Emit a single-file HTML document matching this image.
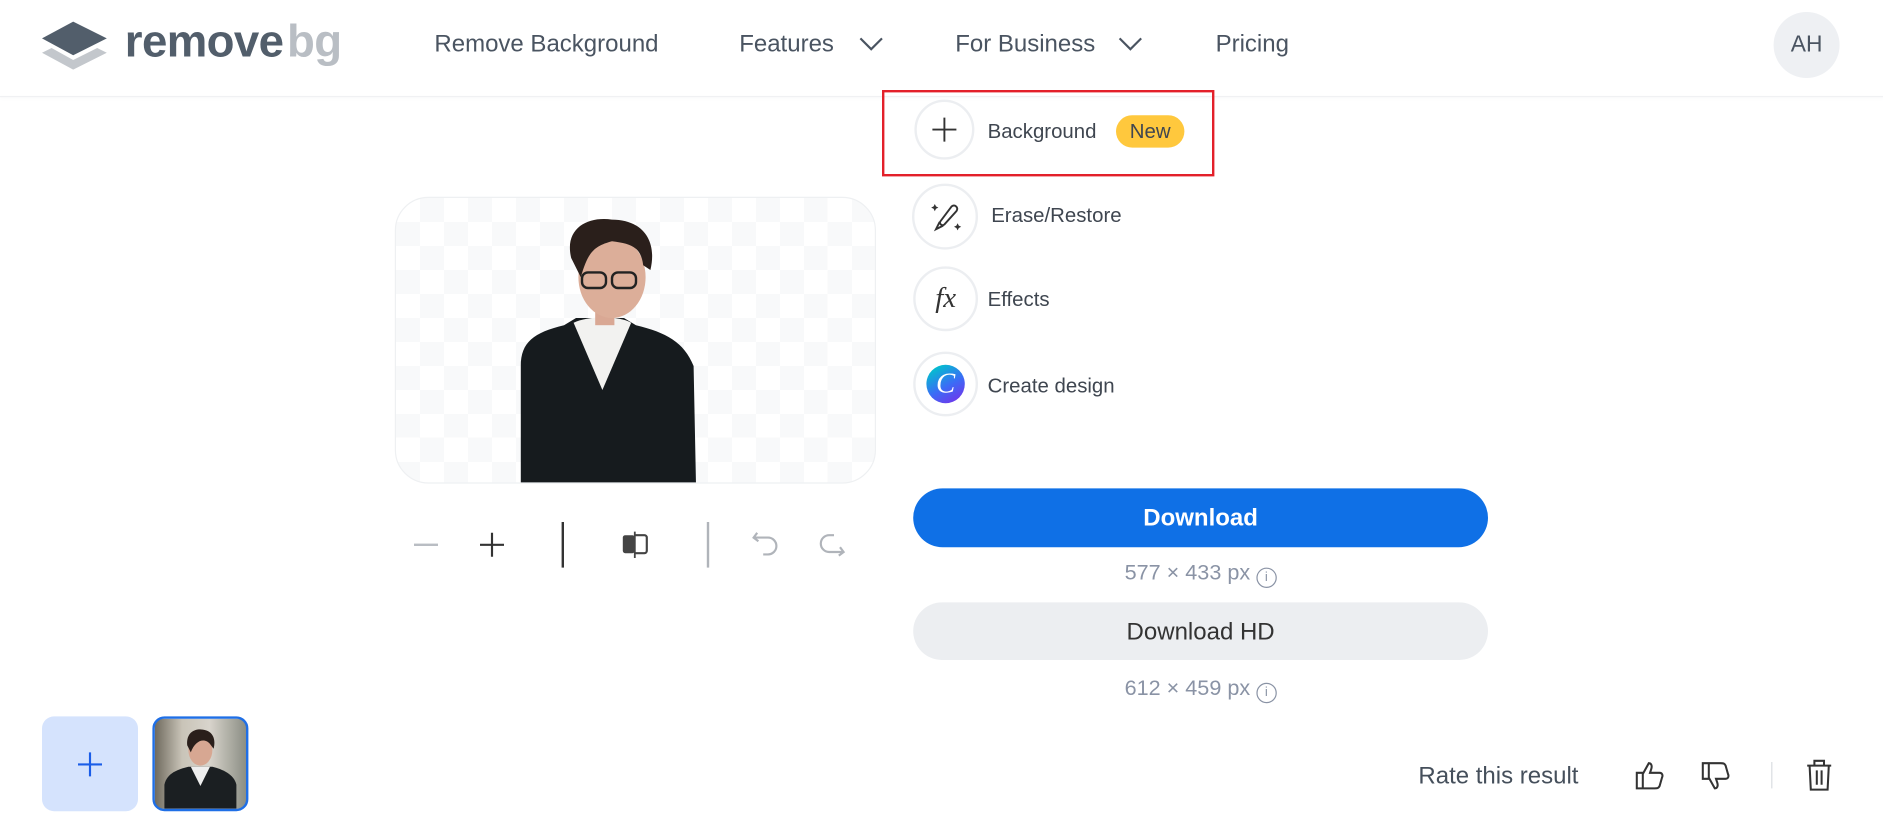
<!DOCTYPE html>
<html><head><meta charset="utf-8"><style>
html,body{margin:0;padding:0;background:#fff;overflow:hidden}
body{width:1883px;height:814px}
#w{position:absolute;left:0;top:0;width:1570px;height:680px;transform:scale(1.2);transform-origin:0 0;font-family:"Liberation Sans",sans-serif;color:#454f5b}
.a{position:absolute}
.nav{font-size:20px;top:26px;color:#4a5461}
.circ{position:absolute;width:50px;height:50px;border:2px solid #eceef1;border-radius:50%;box-sizing:border-box;display:flex;align-items:center;justify-content:center}
.lbl{position:absolute;font-size:17px;color:#3f4650}
.chk{background-color:#fff;background-image:linear-gradient(45deg,#f8f9fa 25%,transparent 25%,transparent 75%,#f8f9fa 75%),linear-gradient(45deg,#f8f9fa 25%,transparent 25%,transparent 75%,#f8f9fa 75%);background-size:40px 40px;background-position:0 0,20px 20px}
</style></head><body><div id="w">
<svg class="a" style="left:33px;top:16px" width="60" height="42" viewBox="0 0 60 42"><path d="M2 28 L28 42 L56 28 L48 24 L28 34 L10 24Z" fill="#c3c7cc"/><path d="M28 2 L56 16 L28 30 L2 16Z" fill="#525e6b"/></svg>
<div class="a" style="left:104px;top:14px;font-size:38px;font-weight:bold;color:#525e6b;letter-spacing:-0.5px">remove<span style="color:#b9bec4;margin-left:3px">bg</span></div>
<div class="a nav" style="left:362px">Remove Background</div>
<div class="a nav" style="left:616px">Features</div>
<svg class="a" style="left:716px;top:31px" width="20" height="12"><path d="M1 1 L10 10 L19 1" stroke="#4a5461" stroke-width="1.8" fill="none"/></svg>
<div class="a nav" style="left:796px">For Business</div>
<svg class="a" style="left:932px;top:31px" width="20" height="12"><path d="M1 1 L10 10 L19 1" stroke="#4a5461" stroke-width="1.8" fill="none"/></svg>
<div class="a nav" style="left:1013px">Pricing</div>
<div class="a" style="left:1478px;top:10px;width:55px;height:55px;border-radius:50%;background:#eef0f3;font-size:19px;line-height:55px;text-align:center;color:#4a5461">AH</div>
<div class="a" style="left:0;top:80px;width:1570px;height:1px;background:#f0f1f3;box-shadow:0 1px 3px #f3f4f6"></div>
<div class="a" style="left:735px;top:75px;width:273px;height:68px;border:2px solid #e3202a"></div>
<div class="circ" style="left:762px;top:83px"><svg width="24" height="24"><path d="M12 2V22M2 12H22" stroke="#333" stroke-width="1.6"/></svg></div>
<div class="lbl" style="left:823px;top:100px">Background</div>
<div class="a" style="left:930px;top:96px;width:57px;height:27px;border-radius:14px;background:#ffc83d;font-size:17px;line-height:27px;text-align:center;color:#3f4650">New</div>
<div class="circ" style="left:760px;top:153px;width:55px;height:55px"><svg width="30" height="30" viewBox="0 0 30 30"><path d="M20 6 C23 4 26 7 24 10 L14 21 C12 23 9 20 11 18Z M10 19 L7 25 L13 22" stroke="#333" stroke-width="1.6" fill="none"/><path d="M6 4l1 2 2 1-2 1-1 2-1-2-2-1 2-1z M25 20l1 2 2 1-2 1-1 2-1-2-2-1 2-1z" fill="#333"/></svg></div>
<div class="lbl" style="left:826px;top:170px">Erase/Restore</div>
<div class="circ" style="left:761px;top:222px;width:54px;height:54px"><span style="font-family:'Liberation Serif',serif;font-style:italic;font-size:24px;color:#333">fx</span></div>
<div class="lbl" style="left:823px;top:240px">Effects</div>
<div class="circ" style="left:761px;top:293px;width:54px;height:54px"><div style="width:32px;height:32px;border-radius:50%;background:linear-gradient(150deg,#00c4cc 10%,#3b6cf6 55%,#7d2ae8 100%);color:#fff;font-family:'Liberation Serif',serif;font-style:italic;font-size:24px;line-height:32px;text-align:center">C</div></div>
<div class="lbl" style="left:823px;top:312px">Create design</div>
<div class="a chk" style="left:329px;top:164px;width:401px;height:239px;border-radius:28px;border:1px solid #eef0f2;box-sizing:border-box;overflow:hidden">
<svg width="401" height="239" style="position:absolute;left:0;top:0"><path d="M104 239 L104 140 C104 120 115 112 140 106 L150 100 L190 100 L200 106 C225 112 240 120 248 140 L250 239Z" fill="#161b1e"/><path d="M148 104 L172 160 L196 104 C186 98 160 98 148 104Z" fill="#f2f2f0"/><rect x="166" y="78" width="16" height="28" fill="#d9a894"/><ellipse cx="180" cy="66" rx="28" ry="34" fill="#dcae99"/><path d="M146 50 C140 25 160 15 180 18 C205 18 218 35 212 60 L206 56 C204 40 195 38 180 36 C165 40 160 45 154 66Z" fill="#2a1f1b"/><rect x="155" y="62" width="20" height="13" rx="5" fill="none" stroke="#222" stroke-width="2"/><rect x="180" y="62" width="20" height="13" rx="5" fill="none" stroke="#222" stroke-width="2"/></svg>
</div>
<div class="a" style="left:345px;top:453px;width:20px;height:2px;background:#b9bdc3"></div>
<svg class="a" style="left:399px;top:443px" width="22" height="22"><path d="M11 1V21M1 11H21" stroke="#333" stroke-width="1.8"/></svg>
<div class="a" style="left:468px;top:435px;width:2px;height:38px;background:#333"></div>
<svg class="a" style="left:517px;top:442px" width="26" height="24"><rect x="2" y="4" width="10" height="15" rx="2" fill="#444"/><path d="M12 4H20a2 2 0 0 1 2 2V17a2 2 0 0 1-2 2H12" stroke="#444" stroke-width="1.8" fill="none"/><path d="M12 1V23" stroke="#444" stroke-width="1.5"/></svg>
<div class="a" style="left:589px;top:435px;width:2px;height:38px;background:#b0b4ba"></div>
<svg class="a" style="left:626px;top:442px" width="26" height="24"><path d="M5 2L2 6L6 9M2 6H14a7 7 0 0 1 0 14H10" stroke="#b0b4ba" stroke-width="1.8" fill="none"/></svg>
<svg class="a" style="left:679px;top:442px" width="26" height="24"><path d="M21 14L24 18L20 21M24 18H12a7 7 0 0 1 0-14H16" stroke="#b0b4ba" stroke-width="1.8" fill="none"/></svg>
<div class="a" style="left:761px;top:407px;width:479px;height:49px;border-radius:25px;background:#0f70e6;color:#fff;font-size:20px;font-weight:bold;line-height:50px;text-align:center">Download</div>
<div class="a" style="left:761px;top:467px;width:479px;text-align:center;font-size:18px;color:#8a93a5">577 × 433 px <span style="display:inline-block;width:15px;height:15px;border:1.5px solid #8a93a5;border-radius:50%;font-size:11px;line-height:15px;vertical-align:-1px">i</span></div>
<div class="a" style="left:761px;top:502px;width:479px;height:48px;border-radius:25px;background:#eceef1;color:#333;font-size:20px;line-height:50px;text-align:center">Download HD</div>
<div class="a" style="left:761px;top:563px;width:479px;text-align:center;font-size:18px;color:#8a93a5">612 × 459 px <span style="display:inline-block;width:15px;height:15px;border:1.5px solid #8a93a5;border-radius:50%;font-size:11px;line-height:15px;vertical-align:-1px">i</span></div>
<div class="a" style="left:35px;top:597px;width:80px;height:79px;border-radius:10px;background:#d5e3fd"><svg style="position:absolute;left:29px;top:29px" width="22" height="22"><path d="M11 1V21M1 11H21" stroke="#1a5de8" stroke-width="1.8"/></svg></div>
<div class="a" style="left:127px;top:597px;width:80px;height:79px;border-radius:10px;border:2px solid #1f6fe6;box-sizing:border-box;overflow:hidden;background:linear-gradient(90deg,#6f6a5e,#c9c4b8 30%,#d8d4cc 60%,#8b8e84)"><svg width="76" height="75" style="position:absolute;left:0;top:0"><path d="M8 75V55C10 45 20 42 28 40H48C56 42 66 46 68 55V75Z" fill="#1b1f22"/><path d="M30 40L38 56L46 40Z" fill="#eee"/><ellipse cx="38" cy="26" rx="10" ry="13" fill="#d7a792"/><path d="M27 22C26 10 35 8 40 9 C49 10 51 18 49 25L46 21C42 16 34 17 30 28Z" fill="#2a1f1b"/></svg></div>
<div class="a" style="left:1182px;top:636px;font-size:20px;color:#454f5b">Rate this result</div>
<svg class="a" style="left:1362px;top:633px" width="26" height="26" viewBox="0 0 26 26"><path d="M2 11H7V24H2Z M7 12L12 3C14 3 15 5 14 8L13 11H21C23 11 24 13 23 15L21 22C20 24 19 24 17 24H7" stroke="#333" stroke-width="1.7" fill="none"/></svg>
<svg class="a" style="left:1417px;top:634px" width="26" height="26" viewBox="0 0 26 26"><path d="M2 2H7V15H2Z M7 14L12 23C14 23 15 21 14 18L13 15H21C23 15 24 13 23 11L21 4C20 2 19 2 17 2H7" stroke="#333" stroke-width="1.7" fill="none"/></svg>
<div class="a" style="left:1476px;top:635px;width:1px;height:22px;background:#dadde1"></div>
<svg class="a" style="left:1504px;top:632px" width="24" height="28" viewBox="0 0 24 28"><path d="M2 6H22M8 6V2H16V6M4 6L5 26H19L20 6M10 10V22M14 10V22" stroke="#333" stroke-width="1.7" fill="none"/></svg>
</div></body></html>
